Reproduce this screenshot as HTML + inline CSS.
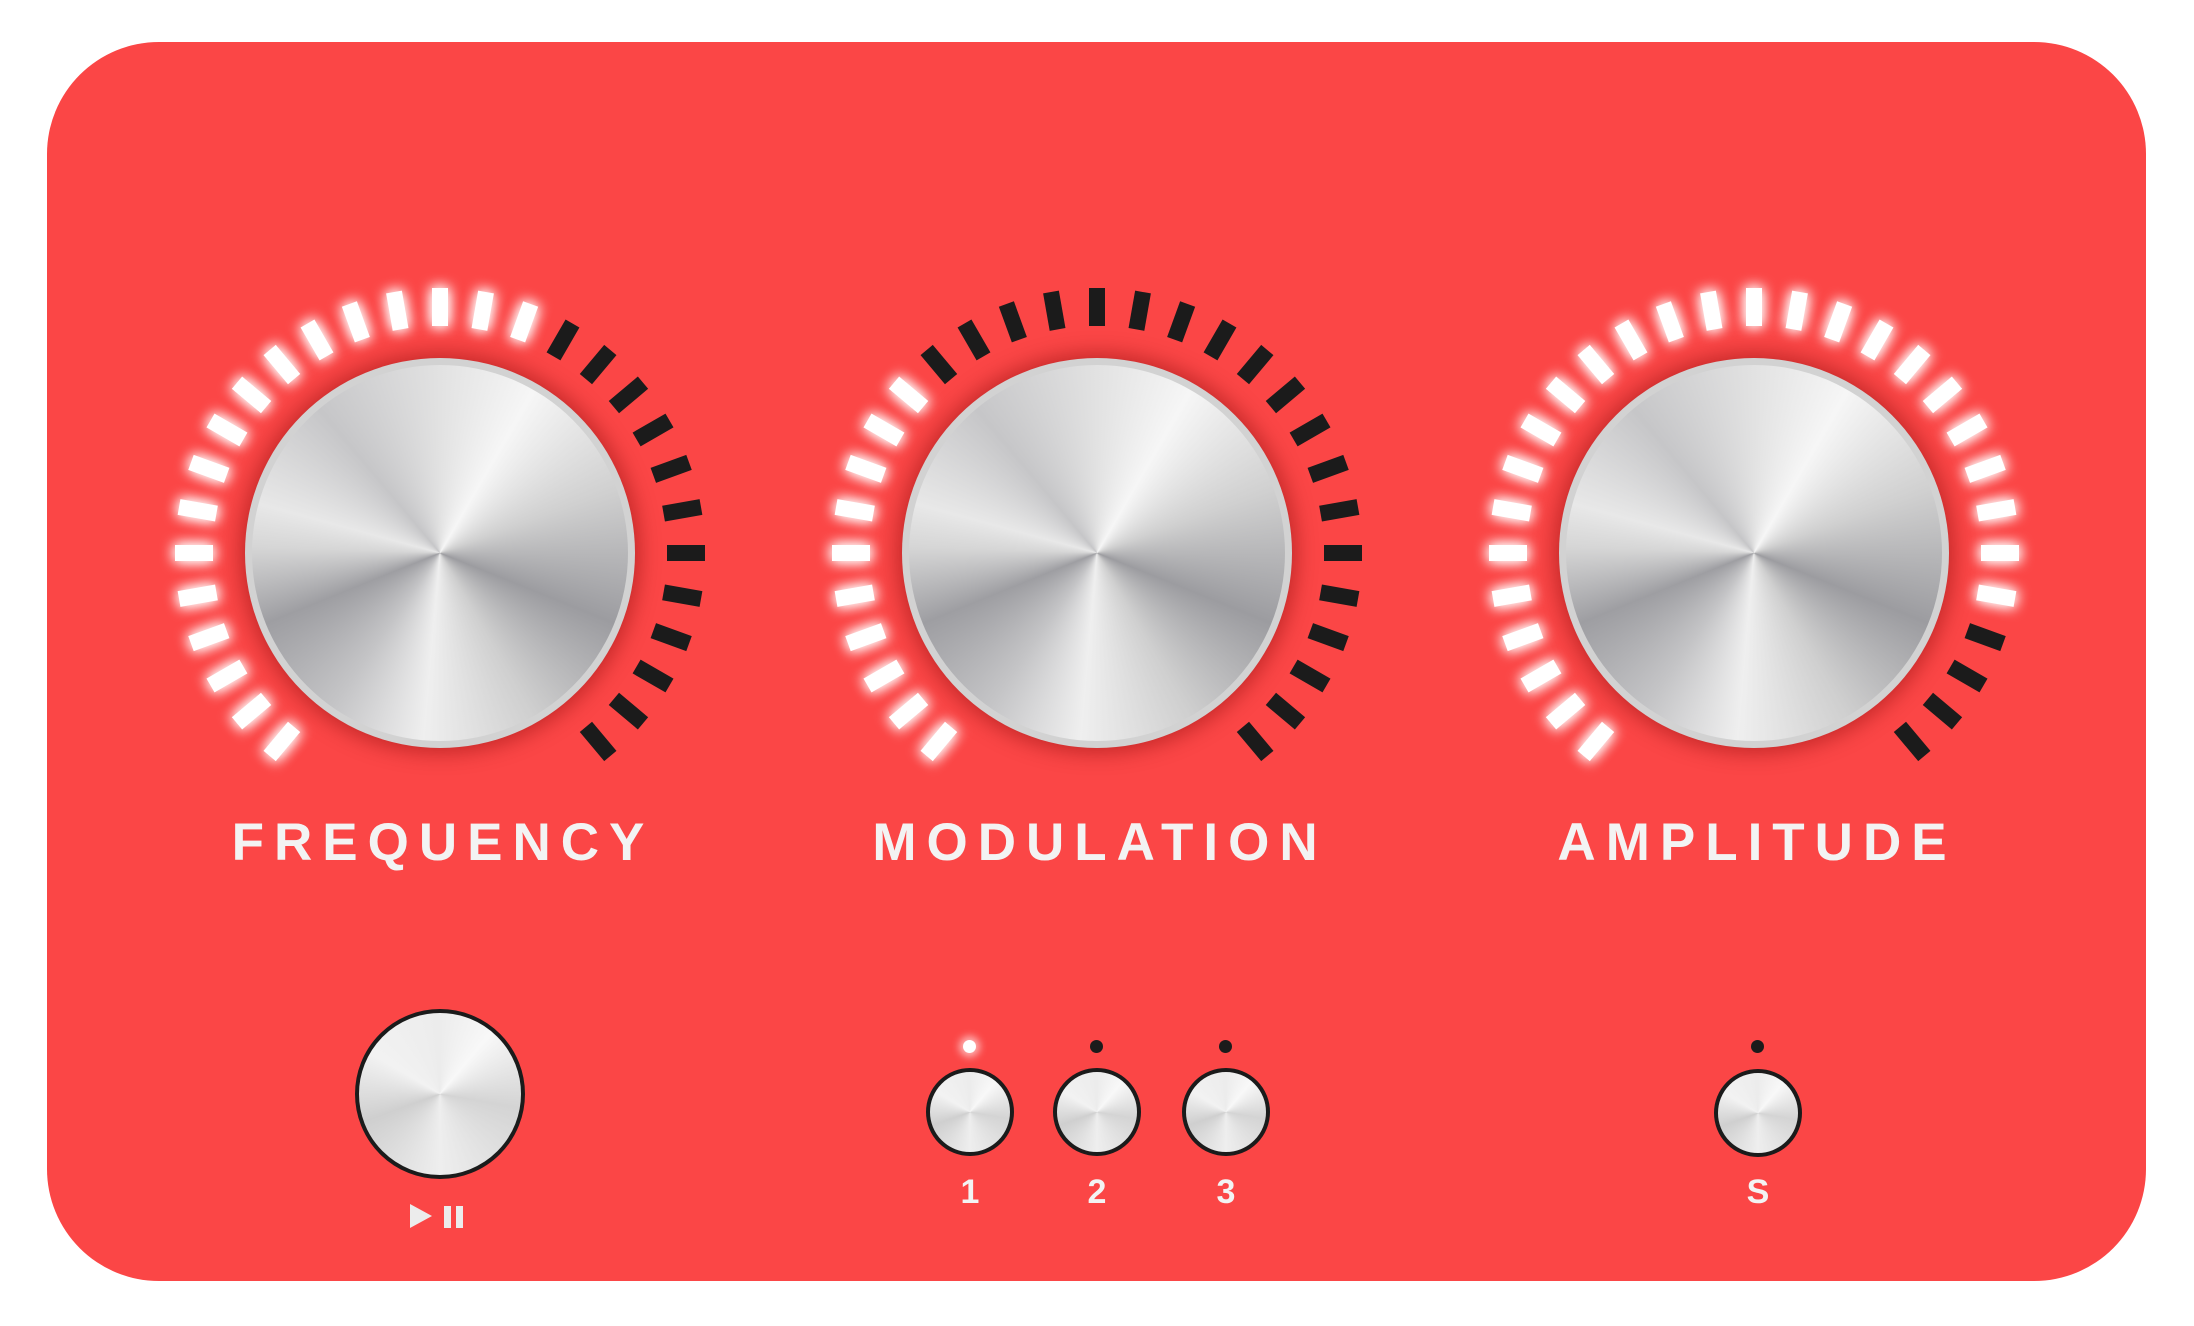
<!DOCTYPE html>
<html><head><meta charset="utf-8"><style>
html,body{margin:0;padding:0;background:#fff;}
body{width:2194px;height:1326px;position:relative;overflow:hidden;font-family:"Liberation Sans",sans-serif;}
.panel{position:absolute;left:47px;top:42px;width:2099px;height:1239px;border-radius:112px;background:#fb4646;}
.knob{position:absolute;border-radius:50%;box-sizing:border-box;}
.big{width:390px;height:390px;background:#d2d2d2;box-shadow:0 0 22px 4px rgba(120,0,0,.45);}
.big .face{position:absolute;left:7px;top:7px;right:7px;bottom:7px;border-radius:50%;
background:conic-gradient(from 0deg,#e2e2e2 0deg,#f6f6f6 30deg,#d0d0d0 70deg,#9c9ca0 112deg,#cfcfcf 150deg,#efefef 185deg,#c4c4c6 215deg,#9e9ea2 248deg,#d6d6d6 272deg,#e8e8e8 285deg,#c6c6c8 320deg,#e2e2e2 360deg);}
.small{border:4px solid #1b1b1b;background:conic-gradient(from 0deg,#ececec,#f8f8f8 40deg,#d4d4d4 100deg,#eeeeee 180deg,#cfcfcf 250deg,#f2f2f2 300deg,#ececec);}
.lbl{position:absolute;color:#f3f3f3;font-weight:bold;font-size:53px;letter-spacing:10px;text-align:center;width:700px;top:812px;text-indent:10px;}
.num{position:absolute;color:#f3f3f3;font-weight:bold;font-size:34px;width:60px;text-align:center;top:1173px;}
.dot{position:absolute;width:13px;height:13px;border-radius:50%;background:#1b1b1b;top:1040px;}
</style></head><body>
<div class="panel"></div>
<svg width="2194" height="1326" style="position:absolute;left:0;top:0">
<defs><filter id="g" x="-100%" y="-100%" width="300%" height="300%">
<feGaussianBlur in="SourceGraphic" stdDeviation="7" result="b"/>
<feMerge><feMergeNode in="b"/><feMergeNode in="b"/><feMergeNode in="SourceGraphic"/></feMerge></filter></defs>
<g id="ticks"></g>
</svg>
<div class="knob big" style="left:245px;top:358px"><div class="face"></div></div>
<div class="knob big" style="left:902px;top:358px"><div class="face"></div></div>
<div class="knob big" style="left:1559px;top:358px"><div class="face"></div></div>
<div class="lbl" style="left:88px">FREQUENCY</div>
<div class="lbl" style="left:745px">MODULATION</div>
<div class="lbl" style="left:1402px">AMPLITUDE</div>
<div class="knob small" style="left:355px;top:1009px;width:170px;height:170px"></div>
<svg style="position:absolute;left:410px;top:1204px" width="60" height="26"><polygon points="0,0 22,12 0,24" fill="#ececec"/><rect x="34" y="2" width="7" height="22" fill="#ececec"/><rect x="46" y="2" width="7" height="22" fill="#ececec"/></svg>
<div class="knob small" style="left:926px;top:1068px;width:88px;height:88px"></div>
<div class="knob small" style="left:1053px;top:1068px;width:88px;height:88px"></div>
<div class="knob small" style="left:1182px;top:1068px;width:88px;height:88px"></div>
<div class="knob small" style="left:1714px;top:1069px;width:88px;height:88px"></div>
<div class="dot" style="left:963px;background:#fff;box-shadow:0 0 8px 4px rgba(255,255,255,.6)"></div>
<div class="dot" style="left:1090px"></div>
<div class="dot" style="left:1219px"></div>
<div class="dot" style="left:1751px"></div>
<div class="num" style="left:940px">1</div>
<div class="num" style="left:1067px">2</div>
<div class="num" style="left:1196px">3</div>
<div class="num" style="left:1728px">S</div>
<script>
var g=document.getElementById('ticks'),s='';
var ks=[[440,553,17],[1097,553,10],[1754,553,25]];
ks.forEach(function(k){for(var i=0;i<29;i++){var a=-140+i*10;var on=i<k[2];
s+='<rect x="'+(k[0]-8)+'" y="'+(k[1]-265)+'" width="16" height="38" fill="'+(on?'#fff':'#1b1b1b')+'"'+(on?' filter="url(#g)"':'')+' transform="rotate('+a+' '+k[0]+' '+k[1]+')"/>';}});
g.innerHTML=s;
</script>
</body></html>
